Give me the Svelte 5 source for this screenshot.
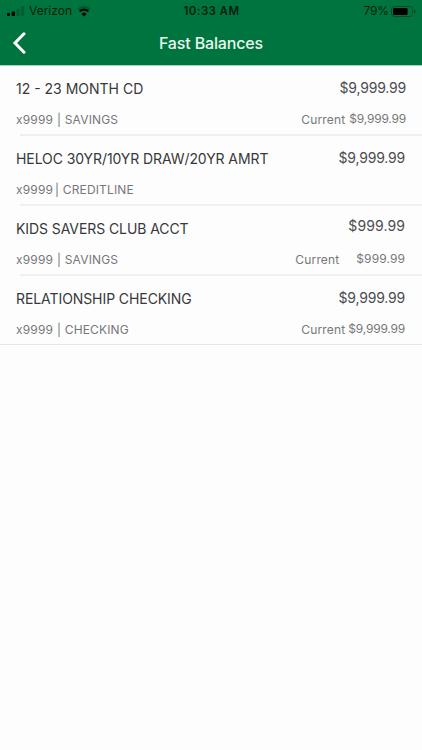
<script lang="ts">
	interface Account {
		name: string;
		type: string;
		balance: string;
		current?: string;
		key: string;
	}

	const accounts: Account[] = [
		{
			name: '12 - 23 MONTH CD',
			type: 'SAVINGS',
			balance: '$9,999.99',
			current: '$9,999.99',
			key: 'cd'
		},
		{
			name: 'HELOC 30YR/10YR DRAW/20YR AMRT',
			type: 'CREDITLINE',
			balance: '$9,999.99',
			key: 'heloc'
		},
		{
			name: 'KIDS SAVERS CLUB ACCT',
			type: 'SAVINGS',
			balance: '$999.99',
			current: '$999.99',
			key: 'kids'
		},
		{
			name: 'RELATIONSHIP CHECKING',
			type: 'CHECKING',
			balance: '$9,999.99',
			current: '$9,999.99',
			key: 'checking'
		}
	];
</script>

<div class="screen">
	<header>
		<div class="status">
			<div class="carrier">
				<svg class="signal" width="18" height="12" viewBox="0 0 18 12">
					<rect x="0" y="7" width="3" height="3" rx="0.7" />
					<rect x="4.7" y="5.5" width="3.3" height="4.5" rx="0.7" />
					<rect class="dim" x="9.6" y="2.8" width="3" height="7.2" rx="0.7" />
					<rect class="dim" x="14.2" y="0" width="3" height="10" rx="0.7" />
				</svg>
				<span>Verizon</span>
				<svg class="wifi" width="14" height="11" viewBox="0 0 14 11">
					<path class="faint" d="M1 3.4 A8.6 8.6 0 0 1 13 3.4" />
					<path d="M2.6 5.4 A6 6 0 0 1 11.4 5.4" />
					<path class="dot" d="M4.5 7.9 A3.5 3.5 0 0 1 9.5 7.9 L7 10.6 Z" />
				</svg>
			</div>
			<div class="clock">10:33 AM</div>
			<div class="power">
				<span>79%</span>
				<svg width="25" height="11" viewBox="0 0 25 11">
					<rect class="shell" x="0.5" y="0.5" width="21" height="10" rx="2.8" />
					<rect x="2" y="2" width="14.6" height="7" rx="1.2" />
					<path class="cap" d="M23 3.6 Q24.6 4 24.6 5.5 Q24.6 7 23 7.4 Z" />
				</svg>
			</div>
		</div>
		<nav>
			<button aria-label="Back">
				<svg width="14" height="22" viewBox="0 0 14 22">
					<path d="M12 1.8 L3 11 L12 20.2" />
				</svg>
			</button>
			<h1>Fast Balances</h1>
		</nav>
	</header>

	<ul>
		{#each accounts as account (account.key)}
			<li class={account.key}>
				<div class="line main">
					<span class="name">{account.name}</span>
					<span class="balance">{account.balance}</span>
				</div>
				<div class="line sub">
					<span class="detail">
						<span>x9999</span>
						<span class="type">| {account.type}</span>
					</span>
					{#if account.current}
						<span class="current">
							<span class="label">Current</span>
							<span class="amount">{account.current}</span>
						</span>
					{/if}
				</div>
			</li>
		{/each}
	</ul>
</div>

<style>
	:global(body) {
		background: #fdfdfd;
	}
	.screen {
		height: 750px;
		overflow: hidden;
		background: #fdfdfd;
		font-family: Inter, 'Liberation Sans', sans-serif;
	}
	header {
		height: 65px;
		box-sizing: border-box;
		background: #00743e;
		box-shadow: 0 1px 0 #a9d3bd;
	}

	.status {
		display: grid;
		grid-template-columns: 1fr auto 1fr;
		align-items: center;
		height: 22px;
		padding: 0 6px 0 7px;
		font-size: 12px;
		color: #04210f;
	}
	.carrier,
	.power {
		display: flex;
		align-items: center;
		line-height: 20px;
	}
	.signal {
		margin: 2px 4px 0 0;
	}
	.signal .dim {
		fill: #005b2f;
	}
	.wifi {
		margin-left: 5px;
		fill: none;
		stroke: #000;
		stroke-width: 2;
	}
	.wifi .faint {
		stroke: #005a2e;
	}
	.wifi .dot {
		fill: #000;
		stroke: none;
	}
	.clock {
		font-weight: 600;
		font-size: 11.5px;
		letter-spacing: 0.4px;
	}
	.power {
		justify-content: flex-end;
		gap: 2px;
		letter-spacing: -0.1px;
	}
	.power .shell {
		fill: none;
		stroke: #004d27;
	}
	.power .cap {
		fill: #004d27;
	}

	nav {
		display: grid;
		grid-template-columns: 60px 1fr 60px;
		align-items: center;
		height: 42px;
	}
	button {
		display: flex;
		padding: 0 0 0 12px;
		border: none;
		background: none;
	}
	button path {
		fill: none;
		stroke: #fff;
		stroke-width: 3;
		stroke-linecap: round;
		stroke-linejoin: miter;
	}
	h1 {
		margin: 0;
		text-align: center;
		font-size: 16px;
		font-weight: 500;
		letter-spacing: -0.15px;
		color: #e8f6ee;
	}

	ul {
		margin: 0;
		padding: 1px 0 0;
		list-style: none;
	}
	li {
		height: 70px;
		box-sizing: border-box;
		padding: 13px 17px 0 16px;
		border-bottom: 2px solid #f0f0f0;
		border-image: linear-gradient(to right, transparent 20px, #f0f0f0 20px) 0 0 2 0;
	}
	li:last-child {
		height: 69px;
		border-image: none;
		border-bottom: 1px solid #e6e6e6;
	}
	.line {
		display: flex;
		justify-content: space-between;
		line-height: 20px;
		white-space: nowrap;
	}
	.main {
		font-size: 14px;
		letter-spacing: -0.08px;
		color: #38383a;
	}
	.sub {
		margin-top: 11px;
		font-size: 12px;
		color: #77777a;
		letter-spacing: 0.15px;
	}
	.balance {
		margin-top: -1px;
		letter-spacing: -0.2px;
		color: #4c4c50;
	}
	.detail,
	.current {
		display: flex;
	}
	.type {
		margin-left: 4px;
	}
	.amount {
		margin: -1px 0 0 4px;
		letter-spacing: -0.2px;
	}
	.cd {
		padding-right: 16px;
	}
	.cd .name {
		letter-spacing: 0;
	}
	.heloc .type {
		margin-left: 2px;
	}
	.kids .balance {
		margin-top: -3px;
		letter-spacing: 0.1px;
	}
	.kids .amount {
		margin-left: 17px;
		letter-spacing: 0.1px;
	}
	.checking .amount {
		margin-left: 3px;
	}
</style>
